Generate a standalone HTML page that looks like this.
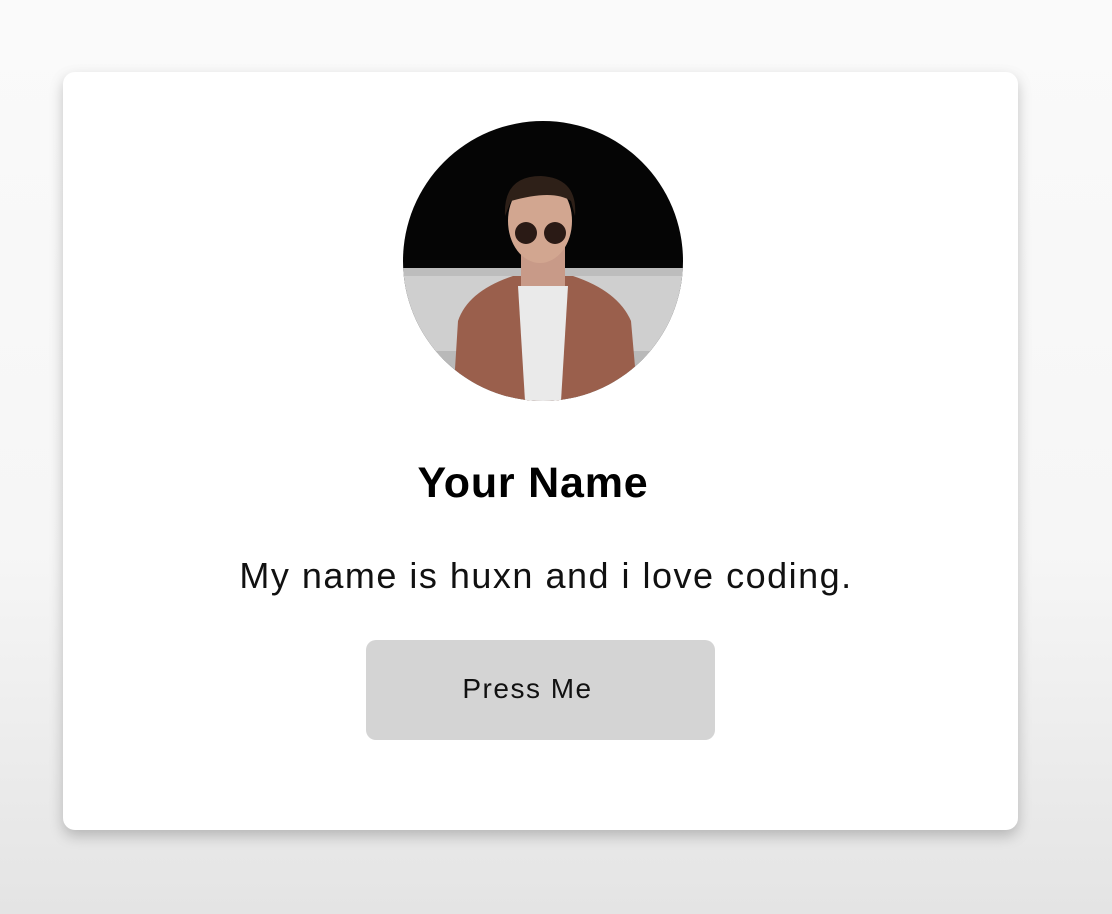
<!DOCTYPE html>
<html><head><meta charset="utf-8"><style>
html,body{margin:0;padding:0;}
body{width:1112px;height:914px;overflow:hidden;background:linear-gradient(#fafafa 0%,#f6f6f6 60%,#e4e4e4 100%);font-family:"Liberation Sans",sans-serif;position:relative;}
.card{position:absolute;left:63px;top:72px;width:955px;height:758px;background:#fff;border-radius:12px;box-shadow:0 6px 14px rgba(0,0,0,0.22);}
.photo{position:absolute;left:403px;top:121px;width:280px;height:280px;}
.name{position:absolute;left:0;width:1066px;top:459px;text-align:center;font-weight:bold;font-size:43px;letter-spacing:0.8px;color:#000;}
.desc{position:absolute;left:0;width:1092px;top:555px;text-align:center;font-size:36px;letter-spacing:1.5px;color:#111;}
.btn{position:absolute;left:366px;top:640px;width:349px;height:100px;background:#d4d4d4;border-radius:10px;}
.btn span{position:absolute;left:0;right:26px;top:33px;text-align:center;font-size:28px;letter-spacing:1.5px;color:#111;}
</style></head><body>
<div class="card"></div>
<svg class="photo" viewBox="0 0 280 280">
<defs><clipPath id="c"><circle cx="140" cy="140" r="140"/></clipPath></defs>
<g clip-path="url(#c)">
<rect width="280" height="280" fill="#050505"/>
<rect y="147" width="280" height="90" fill="#cfcfcf"/>
<rect y="147" width="280" height="8" fill="#bdbdbd"/>
<rect y="230" width="280" height="50" fill="#b9b9b9"/>
<path d="M50 280 L55 200 Q65 170 110 155 L170 155 Q215 170 228 200 L235 280Z" fill="#9a5f4c"/>
<path d="M115 165 L165 165 L158 280 L122 280Z" fill="#eaeaea"/>
<rect x="118" y="125" width="44" height="40" fill="#c89a88"/>
<ellipse cx="137" cy="100" rx="32" ry="42" fill="#d2a690"/>
<path d="M102 95 Q100 55 138 55 Q175 57 172 95 L168 80 Q150 68 108 80Z" fill="#2e2018"/>
<circle cx="123" cy="112" r="11" fill="#2a1a15"/>
<circle cx="152" cy="112" r="11" fill="#2a1a15"/>
</g></svg>
<div class="name">Your Name</div>
<div class="desc">My name is huxn and i love coding.</div>
<div class="btn"><span>Press Me</span></div>
</body></html>
